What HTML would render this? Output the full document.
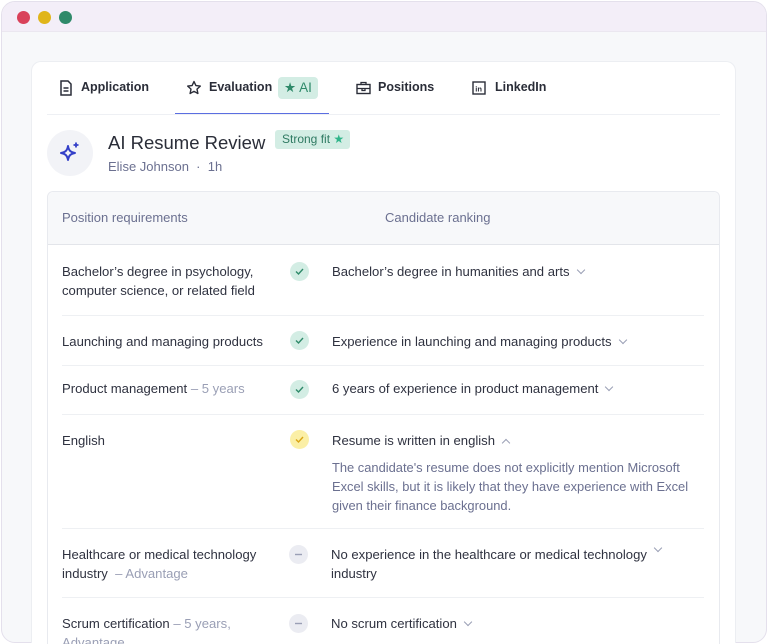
<!DOCTYPE html>
<html style="height:644px;overflow:hidden"><head><style>
*{box-sizing:border-box;margin:0;padding:0}
body{width:768px;height:644px;background:#fff;font-family:"Liberation Sans",sans-serif;position:relative;overflow:hidden;color:#2f3240}
.win{position:absolute;left:1px;top:1px;width:766px;height:642px;border:1px solid #e4e0ec;border-radius:14px;background:#f7f8fa;overflow:hidden}
.bar{height:30px;background:#f3eef8;border-bottom:1px solid #ebe7f0}
.dot{position:absolute;top:9px;width:13px;height:13px;border-radius:50%}
.card{position:absolute;left:31px;top:61px;width:705px;height:582px;background:#fff;border-radius:10px 10px 0 0;border:1px solid #eceef2;border-bottom:none}
.a{position:absolute;white-space:nowrap}
.tab{font-size:12.5px;font-weight:bold;color:#2a2d38;top:80px}
.row{position:absolute;left:62px;width:642px;border-top:1px solid #eef0f3}
.t{font-size:13.1px;line-height:19px;color:#2f3240}
.g{color:#9a9fb5}
.ic{position:absolute;left:228px;width:19px;height:19px;border-radius:50%}
.chev{display:inline-block;width:6px;height:6px;border-right:1.2px solid #9a9fb5;border-bottom:1.2px solid #9a9fb5;transform:rotate(45deg);margin-left:8px;position:relative;top:-3px}
</style></head><body>
<div class="win">
<div class="bar"></div>
<div class="dot" style="left:15px;background:#d9415a"></div>
<div class="dot" style="left:36px;background:#e0b51a"></div>
<div class="dot" style="left:57px;background:#2f8a6a"></div>
</div>
<div class="card"></div>
<svg class="a" style="left:59px;top:80px" width="14" height="16" viewBox="0 0 14 16"><path d="M2 1h7l3 3v11H2z" fill="none" stroke="#2a2d38" stroke-width="1.5"/><path d="M4.5 8h5M4.5 11h5" stroke="#2a2d38" stroke-width="1.4"/></svg>
<div class="a tab" style="left:81px">Application</div>
<svg class="a" style="left:186px;top:80px" width="16" height="16" viewBox="0 0 16 16"><path d="M8 1.5l1.9 4.1 4.4.5-3.3 3 .9 4.4L8 11.3 4.1 13.5 5 9.1 1.7 6.1l4.4-.5z" fill="none" stroke="#2a2d38" stroke-width="1.4" stroke-linejoin="round"/></svg>
<div class="a tab" style="left:209px">Evaluation</div>
<div class="a" style="left:278px;top:77px;width:40px;height:22px;background:#d3ede4;border-radius:4px;font-size:13.5px;color:#2f8a6a;line-height:22px;padding-left:6px">★ AI</div>
<div class="a" style="left:175px;top:113px;width:154px;height:2px;background:#5b6ee1"></div>
<div class="a" style="left:47px;top:114px;width:673px;height:1px;background:#eef0f4"></div>
<svg class="a" style="left:356px;top:81px" width="15" height="14" viewBox="0 0 15 14"><rect x="1" y="3.5" width="13" height="9" fill="none" stroke="#2a2d38" stroke-width="1.4"/><path d="M5 3.5V1.5h5v2M1 7.5h13M6 7.5v2h3v-2" fill="none" stroke="#2a2d38" stroke-width="1.3"/></svg>
<div class="a tab" style="left:378px">Positions</div>
<svg class="a" style="left:472px;top:81px" width="14" height="14" viewBox="0 0 14 14"><rect x="1" y="1" width="12" height="12" fill="none" stroke="#2a2d38" stroke-width="1.4"/><text x="3.3" y="10.5" font-size="7.5" font-weight="bold" fill="#2a2d38" font-family="Liberation Sans">in</text></svg>
<div class="a tab" style="left:495px">LinkedIn</div>
<div class="a" style="left:47px;top:130px;width:46px;height:46px;border-radius:50%;background:#f2f3f7"></div>
<svg class="a" style="left:58px;top:141px" width="25" height="25" viewBox="0 0 25 25"><path d="M10 5c.8 4.5 2.5 6.2 7 7-4.5.8-6.2 2.5-7 7-.8-4.5-2.5-6.2-7-7 4.5-.8 6.2-2.5 7-7z" fill="none" stroke="#3440c8" stroke-width="2" stroke-linejoin="round"/><path d="M18 1.5v5M15.5 4h5" stroke="#3440c8" stroke-width="1.8"/></svg>
<div class="a" style="left:108px;top:132px;font-size:18.5px;color:#2a2d38">AI Resume Review</div>
<div class="a" style="left:275px;top:130px;width:75px;height:19px;background:#d3ede4;border-radius:3px;font-size:12px;color:#2f7a62;line-height:19px;padding-left:7px">Strong fit <span style="color:#2fb58a">★</span></div>
<div class="a" style="left:108px;top:159px;font-size:13px;color:#6b7090">Elise Johnson &nbsp;·&nbsp; 1h</div>
<div class="a" style="left:47px;top:191px;width:673px;height:453px;border:1px solid #e8eaef;border-bottom:none;border-radius:6px 6px 0 0;background:#fff"></div>
<div class="a" style="left:48px;top:192px;width:671px;height:53px;background:#f7f8fa;border-bottom:1px solid #e3e5ea;border-radius:6px 6px 0 0"></div>
<div class="a" style="left:62px;top:210px;font-size:13px;color:#6b7090">Position requirements</div>
<div class="a" style="left:385px;top:210px;font-size:13px;color:#6b7090">Candidate ranking</div>

<div class="row" style="top:245px;height:70px;border-top:none">
<div class="a t" style="left:0;top:17px">Bachelor’s degree in psychology,<br>computer science, or related field</div>
<div class="ic" style="top:17px;background:#d3ede4"><svg width="19" height="19"><path d="M6 9.5l2.5 2.5 4.5-5" fill="none" stroke="#2f8a6a" stroke-width="1.4"/></svg></div>
<div class="a t" style="left:270px;top:17px">Bachelor’s degree in humanities and arts<span class="chev"></span></div>
</div>
<div class="row" style="top:315px;height:50px">
<div class="a t" style="left:0;top:16px">Launching and managing products</div>
<div class="ic" style="top:15px;background:#d3ede4"><svg width="19" height="19"><path d="M6 9.5l2.5 2.5 4.5-5" fill="none" stroke="#2f8a6a" stroke-width="1.4"/></svg></div>
<div class="a t" style="left:270px;top:16px">Experience in launching and managing products<span class="chev"></span></div>
</div>
<div class="row" style="top:365px;height:49px">
<div class="a t" style="left:0;top:13px">Product management <span class="g">– 5 years</span></div>
<div class="ic" style="top:14px;background:#d3ede4"><svg width="19" height="19"><path d="M6 9.5l2.5 2.5 4.5-5" fill="none" stroke="#2f8a6a" stroke-width="1.4"/></svg></div>
<div class="a t" style="left:270px;top:13px">6 years of experience in product management<span class="chev"></span></div>
</div>
<div class="row" style="top:414px;height:114px">
<div class="a t" style="left:0;top:16px">English</div>
<div class="ic" style="top:15px;background:#fbefa6"><svg width="19" height="19"><path d="M6 9.5l2.5 2.5 4.5-5" fill="none" stroke="#d9a515" stroke-width="1.4"/></svg></div>
<div class="a t" style="left:270px;top:16px">Resume is written in english<span class="chev" style="transform:rotate(-135deg);top:1px"></span></div>
<div class="a t" style="left:270px;top:43px;color:#6b7090;white-space:normal;width:368px;font-size:12.9px">The candidate's resume does not explicitly mention Microsoft Excel skills, but it is likely that they have experience with Excel given their finance background.</div>
</div>
<div class="row" style="top:528px;height:69px">
<div class="a t" style="left:0;top:16px">Healthcare or medical technology<br>industry <span class="g">&nbsp;– Advantage</span></div>
<div class="ic" style="left:227px;top:16px;background:#ebecf2"><svg width="19" height="19"><path d="M6 9.5h7" stroke="#9a9fb5" stroke-width="1.4"/></svg></div>
<div class="a t" style="left:269px;top:16px">No experience in the healthcare or medical technology<span class="chev" style="top:-8px"></span><br>industry</div>
</div>
<div class="row" style="top:597px;height:47px">
<div class="a t" style="left:0;top:16px">Scrum certification <span class="g">– 5 years,<br>Advantage</span></div>
<div class="ic" style="left:227px;top:16px;background:#ebecf2"><svg width="19" height="19"><path d="M6 9.5h7" stroke="#9a9fb5" stroke-width="1.4"/></svg></div>
<div class="a t" style="left:269px;top:16px">No scrum certification<span class="chev"></span></div>
</div>
</body></html>
